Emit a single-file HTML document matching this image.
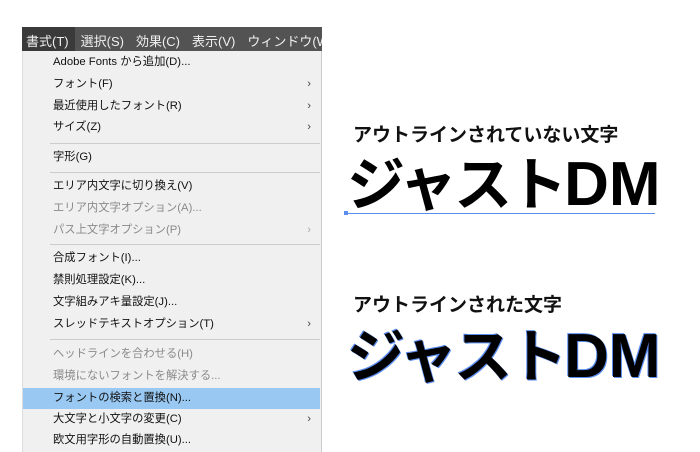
<!DOCTYPE html>
<html><head><meta charset="utf-8"><style>
body{margin:0;width:700px;height:452px;background:#fff;position:relative;overflow:hidden;font-family:"Liberation Sans","Noto Sans CJK JP",sans-serif}
.bar{position:absolute;left:22px;top:27px;width:300px;height:24px;background:#535353;color:#f0f0f0;font-size:13px;white-space:nowrap;overflow:hidden}
.bar span{display:inline-block;padding:4px 6px 0 4px;height:20px;margin-right:2px}
.bar span.a{background:#3a3a3a}
.menu{position:absolute;left:22px;top:51px;width:298px;height:401px;background:#f0f0f0;border-right:1px solid #ccc;border-left:1px solid #ddd}
.it{position:absolute;left:30px;width:268px;font-size:11.3px;color:#111;height:22px;line-height:22px}
.it.d{color:#8a8a8a}
.it b{position:absolute;right:10px;font-weight:normal;color:#444}
.sep{position:absolute;left:27px;width:270px;height:1px;background:#ccc}
.hl{position:absolute;left:0;top:337px;width:297px;height:21px;background:#99c9f3}
.t{position:absolute;font-weight:bold;white-space:nowrap;color:#111}
</style></head><body>
<div class="bar"><span class="a">書式(T)</span><span>選択(S)</span><span>効果(C)</span><span>表示(V)</span><span>ウィンドウ(W)</span></div>
<div class="menu">
<div class="hl"></div>
<div class="it" style="top:0px">Adobe Fonts から追加(D)...</div>
<div class="it" style="top:22px">フォント(F)<b>›</b></div>
<div class="it" style="top:44px">最近使用したフォント(R)<b>›</b></div>
<div class="it" style="top:65px">サイズ(Z)<b>›</b></div>
<div class="sep" style="top:92px"></div>
<div class="it" style="top:95px">字形(G)</div>
<div class="sep" style="top:121px"></div>
<div class="it" style="top:124px">エリア内文字に切り換え(V)</div>
<div class="it d" style="top:146px">エリア内文字オプション(A)...</div>
<div class="it d" style="top:168px">パス上文字オプション(P)<b style="color:#aaa">›</b></div>
<div class="sep" style="top:193px"></div>
<div class="it" style="top:196px">合成フォント(I)...</div>
<div class="it" style="top:218px">禁則処理設定(K)...</div>
<div class="it" style="top:240px">文字組みアキ量設定(J)...</div>
<div class="it" style="top:262px">スレッドテキストオプション(T)<b>›</b></div>
<div class="sep" style="top:288px"></div>
<div class="it d" style="top:292px">ヘッドラインを合わせる(H)</div>
<div class="it d" style="top:314px">環境にないフォントを解決する...</div>
<div class="it" style="top:336px">フォントの検索と置換(N)...</div>
<div class="it" style="top:357px">大文字と小文字の変更(C)<b>›</b></div>
<div class="it" style="top:378px">欧文用字形の自動置換(U)...</div>
</div>
<div class="t" style="left:353px;top:120px;font-size:19px">アウトラインされていない文字</div>
<div class="t" style="left:347px;top:150px;font-size:58px;line-height:70px;letter-spacing:-3px;color:#000">ジャスト<span style="font-size:62px;letter-spacing:0">DM</span></div>
<div style="position:absolute;left:346px;top:213px;width:309px;height:1px;background:#5b8df0"></div>
<div style="position:absolute;left:344px;top:211px;width:4px;height:4px;background:#5b8df0"></div>
<div class="t" style="left:353px;top:290px;font-size:19px">アウトラインされた文字</div>
<div class="t" style="left:347px;top:322px;font-size:58px;line-height:70px;letter-spacing:-3px;color:#000;text-shadow:1px 1px 0 #5b8df0,-1px -1px 0 #5b8df0">ジャスト<span style="font-size:62px;letter-spacing:0">DM</span></div>
</body></html>
